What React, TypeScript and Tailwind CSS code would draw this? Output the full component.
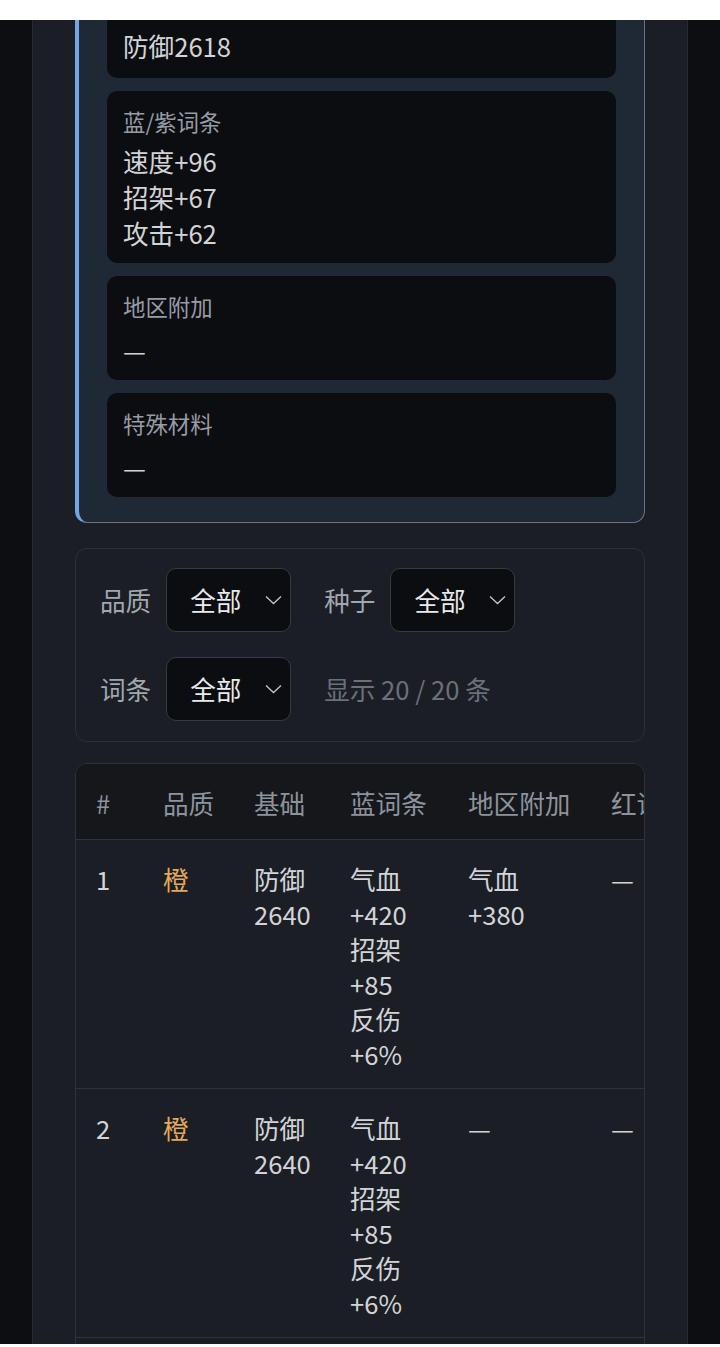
import { ReactNode } from 'react';

type Row = {
  id: number;
  quality: string;
  base: string[];
  blue: string[];
  region: string[];
  red: string[];
};

const rows: Row[] = [
  { id: 1, quality: '橙', base: ['防御', '2640'], blue: ['气血', '+420', '招架', '+85', '反伤', '+6%'], region: ['气血', '+380'], red: ['—'] },
  { id: 2, quality: '橙', base: ['防御', '2640'], blue: ['气血', '+420', '招架', '+85', '反伤', '+6%'], region: ['—'], red: ['—'] },
  { id: 3, quality: '橙', base: ['防御', '2632'], blue: ['气血', '+410'], region: ['—'], red: ['—'] }
];

const cols = 'grid grid-cols-[67px_91px_96px_118px_143px_150px_150px] pl-[20px]';

function Block({ label, children, gap = 'mt-[6px]', pad = 'pb-[12px]' }: { label: string; children: ReactNode; gap?: string; pad?: string }) {
  return (
    <div className={`rounded-[10px] bg-[#0c0d10] px-4 pt-[15px] ${pad}`}>
      <div className="text-[22.4px] leading-[31px] text-[#979ca5]">{label}</div>
      <div className={`${gap} text-[25.6px] leading-[36px] text-[#d2d4d8]`}>{children}</div>
    </div>
  );
}

function Chevron() {
  return (
    <svg width="17" height="10" viewBox="0 0 17 10" fill="none">
      <polyline points="1,1.5 8.5,8.5 16,1.5" stroke="#c3c6cc" strokeWidth="1.3" />
    </svg>
  );
}

function Select() {
  return (
    <div className="flex h-[64px] w-[125px] items-center justify-between rounded-[10px] border border-[#363a42] bg-[#0c0d10] pr-[8px] pl-[23px]">
      <span className="text-[25.6px] leading-[36px] text-[#e9eaec]">全部</span>
      <Chevron />
    </div>
  );
}

function Lines({ items }: { items: string[] }) {
  return (
    <div>
      {items.map((t, i) => (
        <div key={i} className="whitespace-nowrap">
          {t}
        </div>
      ))}
    </div>
  );
}

export default function App() {
  return (
    <div className="bg-white pt-[20px] font-['Noto_Sans_CJK_SC','Noto_Sans',sans-serif]">
      <div className="flex h-[1324px] justify-center overflow-hidden bg-[#0d0e11]">
        <div className="w-[656px] shrink-0 border-x border-[#282b31] bg-[#1b1e24] px-[42px]">
          <section className="-mt-[77px] flex flex-col gap-[13px] rounded-[12px] border border-l-4 border-[#6b7484] border-l-[#72a5e8] bg-[#1f2835] pt-[28px] pr-[28px] pb-[25px] pl-[28px]">
            <Block label="基础属性" gap="mt-[10px]" pad="pb-[14px]">
              防御2618
            </Block>
            <Block label="蓝/紫词条">
              <div>速度+96</div>
              <div>招架+67</div>
              <div>攻击+62</div>
            </Block>
            <Block label="地区附加" gap="mt-[10px]">
              —
            </Block>
            <Block label="特殊材料" gap="mt-[10px]">
              —
            </Block>
          </section>

          <section className="mt-[25px] flex flex-col gap-[25px] rounded-[12px] border border-[#2c3037] px-[24px] pt-[19px] pb-[20px] text-[25.6px] leading-[36px]">
            <div className="flex items-center">
              <span className="text-[#a2a7af]">品质</span>
              <div className="ml-[15px]">
                <Select />
              </div>
              <span className="ml-[33px] text-[#a2a7af]">种子</span>
              <div className="ml-[15px]">
                <Select />
              </div>
            </div>
            <div className="flex items-center">
              <span className="text-[#a2a7af]">词条</span>
              <div className="ml-[15px]">
                <Select />
              </div>
              <span className="ml-[33px] text-[#6b7079]">显示 20 / 20 条</span>
            </div>
          </section>

          <section className="mt-[21px] overflow-hidden rounded-[12px] border border-[#2e323a] text-[25.6px] leading-[35px]">
            <div className={`${cols} border-b border-[#2e323a] bg-[#15171b] pt-[21px] pb-[19px] text-[#8d939c]`}>
              <div>#</div>
              <div>品质</div>
              <div>基础</div>
              <div>蓝词条</div>
              <div>地区附加</div>
              <div className="whitespace-nowrap">红词条</div>
              <div className="whitespace-nowrap">特殊材料</div>
            </div>
            {rows.map((row) => (
              <div key={row.id} className={`${cols} border-b border-[#2e323a] pt-[21px] pb-[17px] text-[#d2d4d8]`}>
                <div>{row.id}</div>
                <div className="text-[#e2aa5c]">{row.quality}</div>
                <Lines items={row.base} />
                <Lines items={row.blue} />
                <Lines items={row.region} />
                <Lines items={row.red} />
                <div>—</div>
              </div>
            ))}
          </section>
        </div>
      </div>
    </div>
  );
}
